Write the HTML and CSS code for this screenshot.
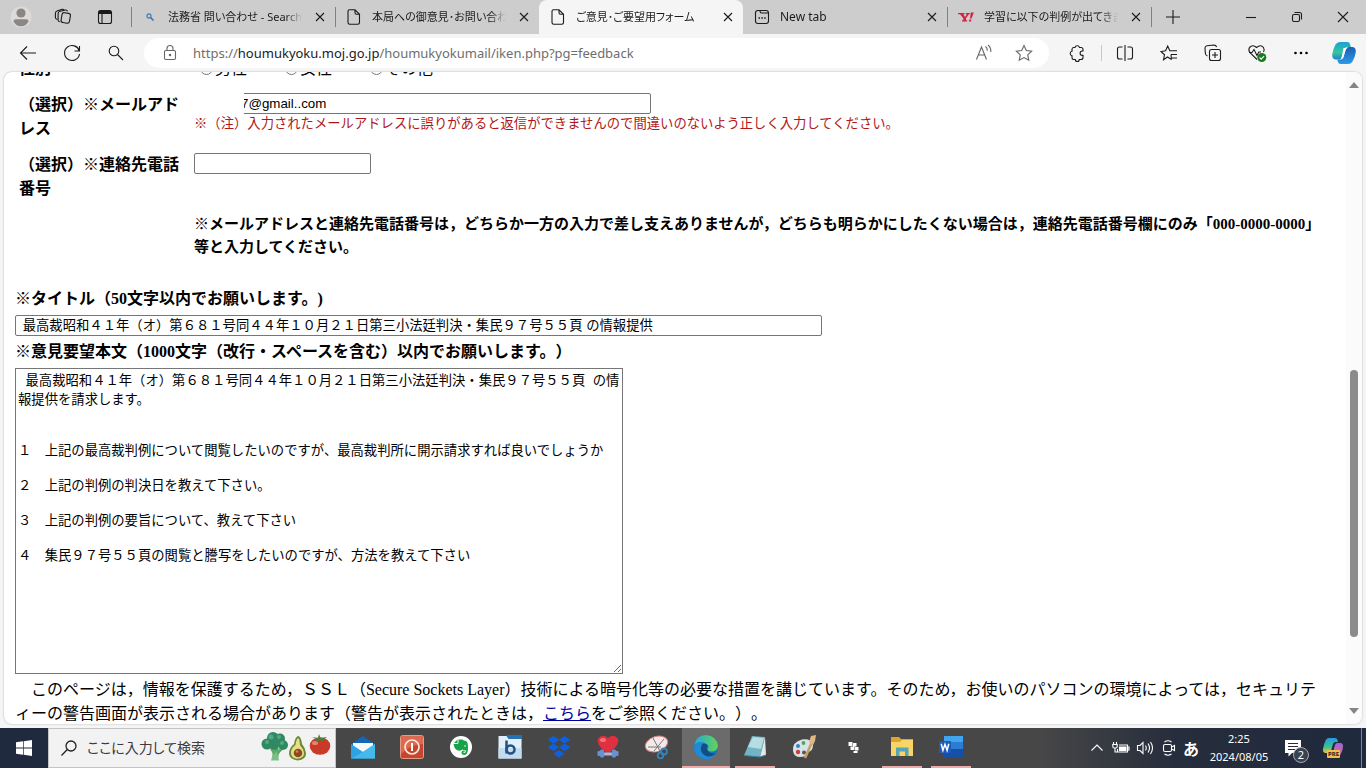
FILE: index.html
```html
<!DOCTYPE html>
<html lang="ja">
<head>
<meta charset="utf-8">
<title>ご意見･ご要望用フォーム</title>
<link rel="stylesheet" href="styles.css">
</head>
<body>
<header class="tabstrip">
  <div class="strip-tools">
    <button class="strip-btn" aria-label="プロファイル"><svg width="22" height="22" viewBox="0 0 22 22"><circle cx="11" cy="11" r="10.5" fill="#dedad8"/><circle cx="11" cy="7" r="4.6" fill="#8b8683"/><path d="M3.6 15.2q0-2 2-2h10.800q2 0 2 2q-1.800 5-7.400 5t-7.400-5z" fill="#8b8683"/></svg></button>
    <button class="strip-btn" aria-label="ワークスペース"><svg class="line" width="18" height="18" viewBox="0 0 18 18"><rect x="7.500" y="5" width="8.500" height="10" rx="2.200" transform="rotate(10 12 10)"/><path d="M5.800 13.800q-1.500 0-1.700-1.500V5.500Q4.200 3.800 6 3.300L11.500 2q1.500-.2 2 1.200M3.300 11.500Q1.500 11 1.400 9.500V5.200Q1.500 3.500 3 3L8 1.300q1.500-.4 2.200.8"/></svg></button>
    <button class="strip-btn" aria-label="タブ操作メニュー"><svg class="line" width="18" height="18" viewBox="0 0 18 18"><rect x="2.500" y="2.500" width="13" height="13" rx="2"/><path d="M3 4.500h12" stroke-width="3"/><path d="M6 5v10"/></svg></button>
  </div>
  <nav class="tabs" aria-label="タブ">
    <div class="tab sep">
      <svg class="tab-icon" viewBox="0 0 16 16"><circle cx="7" cy="7" r="2" fill="none" stroke="#4b86b5" stroke-width="1.300"/><path d="m8.500 8.500 3 3" stroke="#3b76a8" stroke-width="1.600"/></svg>
      <a class="tab-title" href="#">法務省 問い合わせ - Search</a>
      <button class="tab-close" aria-label="閉じる"><svg class="line" width="16" height="16" viewBox="0 0 16 16"><path d="m4 4 8 8M12 4l-8 8"/></svg></button>
    </div>
    <div class="tab sep">
      <svg class="tab-icon line" viewBox="0 0 16 16"><path d="M3.500.8H9l4.500 4.500V13.500q0 1.700-1.700 1.700H3.700Q2 15.200 2 13.500V2.300Q2 .8 3.500.8zM9 .8v3q0 1.500 1.500 1.500h3"/></svg>
      <a class="tab-title" href="#">本局への御意見･お問い合わせ</a>
      <button class="tab-close" aria-label="閉じる"><svg class="line" width="16" height="16" viewBox="0 0 16 16"><path d="m4 4 8 8M12 4l-8 8"/></svg></button>
    </div>
    <div class="tab active">
      <svg class="tab-icon line" viewBox="0 0 16 16"><path d="M3.500.8H9l4.500 4.500V13.500q0 1.700-1.700 1.700H3.700Q2 15.200 2 13.500V2.300Q2 .8 3.500.8zM9 .8v3q0 1.500 1.500 1.500h3"/></svg>
      <a class="tab-title" href="#">ご意見･ご要望用フォーム</a>
      <button class="tab-close" aria-label="閉じる"><svg class="line" width="16" height="16" viewBox="0 0 16 16"><path d="m4 4 8 8M12 4l-8 8"/></svg></button>
    </div>
    <div class="tab">
      <svg class="tab-icon line" viewBox="0 0 16 16"><rect x="1.500" y="1.500" width="13" height="13" rx="2.500"/><path d="M6 1.500q0 2.500 1.500 2.500h7"/><path d="M4.500 9h1.500M7.300 9h1.500M10.200 9h1.500" stroke-width="1.600"/></svg>
      <a class="tab-title latin" href="#">New tab</a>
      <button class="tab-close" aria-label="閉じる"><svg class="line" width="16" height="16" viewBox="0 0 16 16"><path d="m4 4 8 8M12 4l-8 8"/></svg></button>
    </div>
    <div class="tab sep">
      <svg class="tab-icon" viewBox="0 0 16 16"><path d="M0 4h6.500v1.300H5.300L7 8l2-2.700H7.800V4h4v1.300h-1L8 9.300v2h1.200v1.200H4V11.300h1.300v-2L2 5.300H0zM12.800 3.500h3L13.500 9.500h-1.500zM11.500 10.500h2l-.6 2h-2z" fill="#d3223f"/></svg>
      <a class="tab-title" href="#">学習に以下の判例が出てきました</a>
      <button class="tab-close" aria-label="閉じる"><svg class="line" width="16" height="16" viewBox="0 0 16 16"><path d="m4 4 8 8M12 4l-8 8"/></svg></button>
    </div>
    <button class="new-tab sep" aria-label="新しいタブ"><svg class="line" width="16" height="16" viewBox="0 0 16 16"><path d="M8 1v14M1 8h14"/></svg></button>
  </nav>
  <div class="window-controls">
    <button class="win-btn" aria-label="最小化"><svg class="line" width="12" height="12" viewBox="0 0 12 12"><path d="M1 6.500h10"/></svg></button>
    <button class="win-btn" aria-label="元に戻す"><svg class="line" width="12" height="12" viewBox="0 0 12 12"><rect x="1.500" y="3.500" width="7" height="7" rx="1.500"/><path d="M3.500 1.500h5q2 0 2 2v5"/></svg></button>
    <button class="win-btn" aria-label="閉じる"><svg class="line" width="12" height="12" viewBox="0 0 12 12"><path d="m1 1 10 10M11 1 1 11"/></svg></button>
  </div>
</header>

<div class="toolbar">
  <button class="tool" aria-label="戻る"><svg class="line" width="20" height="20" viewBox="0 0 20 20"><path d="M18 10H2.500M9 3.500 2.500 10 9 16.500"/></svg></button>
  <button class="tool" aria-label="更新"><svg class="line" width="20" height="20" viewBox="0 0 20 20"><path d="M17.300 8A7.500 7.500 0 1 0 17.500 11M17.500 3v5H12.500"/></svg></button>
  <button class="tool" aria-label="検索"><svg class="line" width="20" height="20" viewBox="0 0 20 20"><circle cx="8" cy="8" r="4.800"/><path d="m11.500 11.500 5.500 5.500"/></svg></button>
  <div class="address">
    <svg class="line gray" width="20" height="20" viewBox="0 0 20 20"><rect x="4.500" y="7.500" width="11" height="9" rx="1.500"/><path d="M7 7.500V5.500a3 3 0 0 1 6 0v2"/><circle cx="10" cy="12" r=".7"/></svg>
    <div class="url" role="textbox" contenteditable="true" spellcheck="false" aria-label="アドレス">https://<span class="host">houmukyoku.moj.go.jp</span>/houmukyokumail/iken.php?pg=feedback</div>
    <button class="in-address" aria-label="音声で読み上げる"><svg class="line gray" width="20" height="20" viewBox="0 0 20 20"><path d="M2.500 16.500 7.500 4l5 12.500M4.300 12h6.400M11.500 3.500q2 1.500 1.800 4.200M14 2q3.200 2.600 2.800 7"/></svg></button>
    <button class="in-address" aria-label="お気に入りに追加"><svg class="line gray" width="20" height="20" viewBox="0 0 20 20"><path d="m10 2.500 2.300 5 5.400.7-4 3.700 1.100 5.400-4.800-2.700-4.800 2.700 1.100-5.400-4-3.700 5.400-.7z"/></svg></button>
  </div>
  <button class="tool" aria-label="拡張機能"><svg class="line" width="20" height="20" viewBox="0 0 20 20"><path d="M6.500 4.500H8a2.300 2.300 0 0 1 4.500 0H14q2 0 2 2V8h-.7a2.200 2.200 0 0 0 0 4.400h.7V14.500q0 2-2 2h-1.700a2 2 0 0 1-4 0H6.500q-1.500 0-1.500-2V12.700a2.300 2.300 0 0 1 0-4.500V6.500q0-2 1.500-2z"/></svg></button>
  <span class="divider"></span>
  <button class="tool" aria-label="画面を分割"><svg class="line" width="20" height="20" viewBox="0 0 20 20"><path d="M10 2v16M7.500 4H4.500Q2.500 4 2.500 6v8q0 2 2 2h3M12.500 4h3q2 0 2 2v8q0 2-2 2h-3"/></svg></button>
  <button class="tool" aria-label="お気に入り"><svg class="line" width="20" height="20" viewBox="0 0 20 20"><path d="M12.500 16.500 8.500 14 4.500 16.800l1-5L2 8.500l4.600-.7L8.700 3l2.100 4.800H18M12 11.500h6M13 15h5M12 11.500l.5 5"/></svg></button>
  <button class="tool" aria-label="コレクション"><svg class="line" width="20" height="20" viewBox="0 0 20 20"><rect x="6.500" y="6.500" width="11" height="11" rx="2"/><path d="M12 9v6M9 12h6M4.500 13Q2.500 12.500 2.300 10L2 5Q2 3 4 2.700l7-.7q2 0 2.600 2"/></svg></button>
  <button class="tool" aria-label="ブラウザーのエッセンシャル"><svg class="line" width="20" height="20" viewBox="0 0 20 20"><path d="M10 16.500 3 9.700Q1 7 2.500 4.500 5.800 1 9.500 4.500 13.800 1 16.500 4.500q1.300 2.500 0 4.500M2 9.500h3L7 6.500l3 6 1.800-3.500H14"/><circle cx="14.800" cy="14.500" r="4.500" fill="#187a1c" stroke="none"/><path d="m12.600 14.500 1.600 1.600 2.900-3" stroke="#fff"/></svg></button>
  <button class="tool" aria-label="設定など"><svg width="20" height="20" viewBox="0 0 20 20"><circle cx="4.500" cy="10" r="1.300"/><circle cx="10" cy="10" r="1.300"/><circle cx="15.500" cy="10" r="1.300"/></svg></button>
  <button class="tool" aria-label="Copilot"><svg width="26" height="26" viewBox="0 0 26 26"><defs><linearGradient id="cl" x2="0" y2="1"><stop stop-color="#1aa0d8"/><stop offset=".6" stop-color="#35c79b"/><stop offset="1" stop-color="#1d7fd0"/></linearGradient><linearGradient id="cr" x2="0" y2="1"><stop stop-color="#1c5db0"/><stop offset="1" stop-color="#2a9be8"/></linearGradient></defs><path d="M9 2h7.500q2 0 2.500 2l.8 3h-3.500q-2 0-2.600 2l-2.500 8q-.8 2.500-3 2.500H5q-4 0-3.800-5Q2 9 4.500 4.500 6 2 9 2z" fill="url(#cl)"/><path d="M17 24H9.500q-2 0-2.500-2l-.8-2.500h3.500q2 0 2.600-2l2.500-8q.8-2.500 3-2.500H21q4 0 3.800 5-.8 5.500-3.300 9.500Q20 24 17 24z" fill="url(#cr)"/><path d="M12.500 8h4q-1.600.5-2 2l-2 7q-.5 1.500-2 1.500h-1q1-.7 1.300-2z" fill="#fff"/></svg></button>
</div>

<main class="panel">
  <form class="page">
    <div class="fields">
      <span class="label">性別</span>
      <div class="genders">
        <label><input type="radio" name="sex">男性</label>
        <label><input type="radio" name="sex">女性</label>
        <label><input type="radio" name="sex">その他</label>
      </div>
      <label class="label" for="mail">（選択）※メールアドレス</label>
      <div class="mail-cell">
        <input class="box mail" id="mail" type="text" value="7@gmail..com">
        <span class="mask"></span>
        <p class="warn">※（注）入力されたメールアドレスに誤りがあると返信ができませんので間違いのないよう正しく入力してください。</p>
      </div>
      <label class="label" for="tel">（選択）※連絡先電話番号</label>
      <div class="tel-cell"><input class="box tel" id="tel" type="text"></div>
      <p class="note">※メールアドレスと連絡先電話番号は，どちらか一方の入力で差し支えありませんが，どちらも明らかにしたくない場合は，連絡先電話番号欄にのみ「000-0000-0000」等と入力してください。</p>
    </div>
    <label class="heading" for="subject">※タイトル（50文字以内でお願いします。)</label>
    <input class="box subject" id="subject" type="text" value=" 最高裁昭和４１年（オ）第６８１号同４４年１０月２１日第三小法廷判決・集民９７号５５頁 の情報提供">
    <label class="heading" for="body">※意見要望本文（1000文字（改行・スペースを含む）以内でお願いします。）</label>
    <textarea class="body-text" id="body">  最高裁昭和４１年（オ）第６８１号同４４年１０月２１日第三小法廷判決・集民９７号５５頁  の情報提供を請求します。


１　上記の最高裁判例について閲覧したいのですが、最高裁判所に開示請求すれば良いでしょうか

２　上記の判例の判決日を教えて下さい。

３　上記の判例の要旨について、教えて下さい

４　集民９７号５５頁の閲覧と謄写をしたいのですが、方法を教えて下さい</textarea>
    <p class="ssl">　このページは，情報を保護するため，ＳＳＬ（Secure Sockets Layer）技術による暗号化等の必要な措置を講じています。そのため，お使いのパソコンの環境によっては，セキュリティーの警告画面が表示される場合があります（警告が表示されたときは，<a href="#">こちら</a>をご参照ください。）。</p>
  </form>
  <div class="scrollbar" aria-hidden="true">
    <svg width="10" height="6" viewBox="0 0 10 6"><path d="M5 0l5 6H0z" fill="#858585"/></svg>
    <div class="track"><div class="thumb"></div></div>
    <svg width="10" height="6" viewBox="0 0 10 6"><path d="M5 6 0 0h10z" fill="#858585"/></svg>
  </div>
</main>

<footer class="taskbar">
  <button class="start" aria-label="スタート"><svg width="16" height="16" viewBox="0 0 16 16" fill="#fff"><path d="M0 2.300 7 1.300v6.300H0zM7.700 1.200 16 0v7.600H7.700zM0 8.400h7v6.300l-7-1zM7.700 8.400H16V16l-8.300-1.200z"/></svg></button>
  <label class="search">
    <svg width="18" height="18" viewBox="0 0 18 18" fill="none" stroke="#222" stroke-width="1.300"><circle cx="11" cy="7" r="5"/><path d="M7.300 10.500 1.500 16.500"/></svg>
    <input class="search-input" type="text" placeholder="ここに入力して検索" aria-label="検索">
    <svg width="72" height="34" viewBox="0 0 72 34"><path d="M12 17q1 7-1 12.500h8q-1.500-5 2-11l-4-2z" fill="#7cbf86"/><path d="m11 18 3 4 3-5 1 5 5-5" stroke="#58a868" stroke-width="2" fill="none"/><g fill="#2f8a62"><circle cx="7" cy="13" r="5.500"/><circle cx="13" cy="7" r="6"/><circle cx="20" cy="7.500" r="5"/><circle cx="23" cy="14" r="5"/><circle cx="14" cy="14" r="5"/></g><g fill="#54a982"><circle cx="11" cy="6" r="2.500"/><circle cx="19" cy="6" r="2"/><circle cx="7" cy="11" r="2"/><circle cx="22" cy="12" r="2"/></g><path d="M38 5q-3 1-4 8-5 4-5 9.500t8.500 7q9-1 8.500-7.500-.5-5-4-9Q41 5 38 5z" fill="#6b8a35"/><path d="M38 7q-2 2-2.500 7-4.500 3-4.500 8t6.500 5.800q7-.8 6.500-6-.5-4-4-7.500Q39.500 7 38 7z" fill="#e9dd8b"/><circle cx="38" cy="22" r="4.300" fill="#8c4a20"/><circle cx="37" cy="20.500" r="1.300" fill="#c98a56"/><ellipse cx="60" cy="15" rx="10.300" ry="8.800" fill="#c93a28"/><ellipse cx="55" cy="12" rx="3" ry="2" fill="#e88370"/><path d="m52 6 6 1 1-4 1.500 4L67 6l-4 3 2 2-5-2-4 2 .5-3z" fill="#4b7d3a"/></svg>
  </label>
  <div class="apps">
    <button class="app" aria-label="メール"><svg width="26" height="26" viewBox="0 0 26 26"><path d="M1 10 13 2l12 8v14H1z" fill="#1465b5"/><path d="M3 9h20v9H3z" fill="#f4f8fb"/><path d="m1 10 12 8L25 10v14.500H1z" fill="#2ba3e4"/><path d="M1 24.500 13 18l12-8v14.500z" fill="#45b8ee"/></svg></button>
    <button class="app" aria-label="シャットダウン"><svg width="26" height="26" viewBox="0 0 26 26"><rect x="1.500" y="1.500" width="23" height="23" rx="2" fill="#c8452d" stroke="#e79a86"/><path d="M2 2h22v8Q12 10 2 20z" fill="#dc6a50"/><circle cx="13" cy="13" r="7" fill="none" stroke="#fbe5de" stroke-width="1.700"/><path d="M13 9v8" stroke="#fff" stroke-width="2"/></svg></button>
    <button class="app" aria-label="Evernote"><svg width="26" height="26" viewBox="0 0 26 26"><circle cx="13" cy="13" r="11" fill="#fff"/><path d="M10.500 5.500h4q1 1.200 3.500 1.500 2 .5 2 7 0 6.500-3.500 7-3 0-3-2.500 0-2 2-2 1.500.2 1.500 1.200h-1.500v1q2.300 1 2.500-2.200-2 0-3.500-1-1.500 1.500-4.500 1-3.500-.8-4.500-6.500H9q1.500 0 1.500-1.500z" fill="#16a448"/><path d="M9.500 5.500v3.500H6z" fill="#16a448"/><circle cx="17" cy="12" r=".8" fill="#fff"/></svg></button>
    <button class="app" aria-label="b"><svg width="26" height="26" viewBox="0 0 26 26"><path d="M10 1h15v10H10z" fill="#2273b5"/><path d="M1.500 2h8l2 3h13v19.500h-23z" fill="#e1effa"/><path d="M1.500 14h23v10.500h-23z" fill="#c2ddf1"/><path d="M9.500 6.500v13" stroke="#24527d" stroke-width="2.500"/><circle cx="13.500" cy="15.500" r="4" fill="none" stroke="#24527d" stroke-width="2.500"/></svg></button>
    <button class="app" aria-label="Dropbox"><svg width="26" height="26" viewBox="0 0 26 26" fill="#0f60e0"><path d="m7.500 2 6 3.800-6 3.700-6-3.700zM18.500 2l6 3.800-6 3.700-5.500-3.700zM7.500 9.500l5.500 3.700-5.500 3.800-6-3.800zM18.500 9.500l6 3.700-6 3.800-5.500-3.800zM13 16l5.500 3.700-5.500 3.800-5.500-3.800z"/></svg></button>
    <button class="app" aria-label="健康"><svg width="26" height="26" viewBox="0 0 26 26"><path d="M13 20Q1 11 3 5q4-6 10-1 6-5 10 1 2 6-10 15z" fill="#df3041"/><ellipse cx="8" cy="6" rx="3" ry="2" fill="#f3727a"/><path d="M8 20h10" stroke="#a2b9e0" stroke-width="3"/><g fill="#6a91d2"><rect x="5" y="15.500" width="4" height="8" rx="1.500"/><rect x="17" y="15.500" width="4" height="8" rx="1.500"/><rect x="2.500" y="17" width="3" height="5" rx="1"/><rect x="20.500" y="17" width="3" height="5" rx="1"/></g></svg></button>
    <button class="app" aria-label="Snipping Tool"><svg width="26" height="26" viewBox="0 0 26 26"><ellipse cx="12.500" cy="10" rx="11.500" ry="7.500" fill="#f3e9ea" stroke="#d77c83" transform="rotate(-18 12.500 10)"/><path d="m9 4 8 15M20 5 10 17M4 13h13" stroke="#777" fill="none"/><g fill="none" stroke="#3683b5" stroke-width="1.800"><circle cx="20" cy="17.500" r="3"/><circle cx="16.500" cy="21.500" r="2.800"/></g></svg></button>
    <button class="app current" aria-label="Microsoft Edge"><svg width="26" height="26" viewBox="0 0 26 26"><defs><linearGradient id="eg"><stop stop-color="#25a9df"/><stop offset="1" stop-color="#63d355"/></linearGradient></defs><circle cx="13" cy="13" r="12" fill="#1673bf"/><path d="M1 12Q3 1 13 1q11 1 12 11-.5 5.500-7 5.500-4.500-.5-3.200-3 2-3-2-5Q5 6 1 12z" fill="url(#eg)"/><path d="M9 10q-4 9 5 12 5 1.200 9-2-4 5.500-11 5Q1 23 1 13 5 6.500 13 9.500q-3-.5-4 .5z" fill="#2289d4"/><path d="M9.500 10Q5 17 12 21.500q5.500 2.500 11-2-5 1-8-2.500-2.500-3-.5-5-1.500-3-5-2z" fill="#124d87"/></svg></button>
    <button class="app running" aria-label="メモ帳"><svg width="26" height="26" viewBox="0 0 26 26"><path d="m10 2 13 1-5 20-16-1.500z" fill="#73b4c4"/><path d="m11 3 11 1-3 11-13-2z" fill="#b6dde3"/><path d="m23 3 1 18-6 2z" fill="#dfe8ec"/><path d="m2 21.500 16 1.500 6-2" stroke="#397f99" fill="none"/></svg></button>
    <button class="app" aria-label="ペイント"><svg width="26" height="26" viewBox="0 0 26 26"><path d="M2 17Q1 8 11 5.500q10-1 11 5.500 0 6-5 7-1.500 5-8 5-6 0-7-6z" fill="#d7e3ea"/><circle cx="7" cy="12" r="2" fill="#3c7fc0"/><circle cx="12.500" cy="9" r="1.900" fill="#55a34c"/><circle cx="7" cy="18" r="2.200" fill="#d33b34"/><circle cx="13" cy="18.500" r="2" fill="#555"/><path d="m14 24 7-16" stroke="#c8a064" stroke-width="2.600"/><path d="m18 8 2-6 5-1-1 6-2 4z" fill="#dfb982"/></svg></button>
    <button class="app" aria-label="ブロック"><svg width="26" height="26" viewBox="0 0 26 26" fill="#fff"><path d="M8.500 8h4v4h-4zM13 9h3.500v3.500H13zM10.500 12.500h4V16h-4zM15 13h3.500v3.500H15zM13.500 17h4v2h-4z"/></svg></button>
    <button class="app running" aria-label="エクスプローラー"><svg width="26" height="26" viewBox="0 0 26 26"><path d="M2 3h8l2 2h12v6H2z" fill="#e0a42c"/><path d="M2 8h9l2-2h11v16H2z" fill="#f9d568"/><path d="M7 22v-8.500h12.500V22h-3.500v-4.500h-5.500V22z" fill="#58a4b4"/></svg></button>
    <button class="app running" aria-label="Word"><svg width="26" height="26" viewBox="0 0 26 26"><rect x="6" y="2" width="19" height="21" rx="1" fill="#2b7cd3"/><path d="M6 2h19v6H6z" fill="#41a5ee"/><path d="M6 15h19v8H6z" fill="#174ea6"/><rect x="1" y="7" width="12" height="12" rx="1" fill="#185abd"/><path d="m3.200 9.700 1.700 6.600 2.100-6 2.100 6 1.700-6.600" fill="none" stroke="#fff" stroke-width="1.500"/></svg></button>
  </div>
  <div class="tray">
    <button class="tray-btn" aria-label="隠れているインジケーター"><svg class="tray-icon" viewBox="0 0 18 18"><path d="m3.500 11.500 5.500-5.500 5.500 5.500"/></svg></button>
    <button class="tray-btn" aria-label="バッテリー"><svg class="tray-icon" viewBox="0 0 18 18"><path d="M7 6h8.500v7H5.500v-3M15.500 8H17v3h-1.500M1.500 3v2.500M4.500 3v2.500M.8 5.500h4.400v2q0 1.500-1.500 1.500H2.300Q.8 9 .8 7.500zM3 9v4h2.500"/><path d="M7.500 8H14v3.500H7.500z" fill="#fff"/></svg></button>
    <button class="tray-btn" aria-label="音量"><svg class="tray-icon" viewBox="0 0 18 18"><path d="M1.500 6.500h2.500l3-3v11l-3-3H1.500zM9.500 6.500q1.500 2.500 0 5M12 4.500q3 4.500 0 9M14.500 3q4 6 0 12"/></svg></button>
    <button class="tray-btn" aria-label="会議"><svg class="tray-icon" viewBox="0 0 18 18"><rect x="3.500" y="5.500" width="8" height="7" rx="1.500"/><path d="m11.500 8 3-1.500v5l-3-1.500M4.500 3q3.500-2.500 7 0M4.500 15q3.500 2.500 7 0"/></svg></button>
    <button class="tray-btn ime" aria-label="IME">あ</button>
    <button class="clock"><span>2:25</span><span>2024/08/05</span></button>
    <button class="notify" aria-label="通知"><svg width="26" height="26" viewBox="0 0 26 26"><path d="M2 5h16v13H9l-3.500 3.500V18H2z" fill="#fff"/><path d="M5 8.500h10M5 11.500h10M5 14.500h7" stroke="#252d3d"/></svg><span class="count">2</span></button>
    <button class="pre" aria-label="Copilot プレビュー"><svg width="22" height="22" viewBox="0 0 22 22"><defs><linearGradient id="pl" x2="0" y2="1"><stop stop-color="#219be8"/><stop offset=".6" stop-color="#3fc08b"/><stop offset="1" stop-color="#f0c441"/></linearGradient><linearGradient id="pr" x2="0" y2="1"><stop stop-color="#9467e6"/><stop offset="1" stop-color="#f06a70"/></linearGradient></defs><path d="M7 1h6q2 0 2.500 2l.5 2h-2.500q-2 0-2.500 2L9 14q-.6 2-2.500 2H4q-3.500 0-3-4 .8-5 2.800-9Q5 1 7 1z" fill="url(#pl)"/><path d="M14 19H8l3-4 2-7q.5-2 2.500-2H18q3.500 0 3 4-.5 4-2.500 7.500Q17 19 14 19z" fill="url(#pr)"/></svg><span class="pre-tag">PRE</span></button>
    <button class="show-desktop" aria-label="デスクトップの表示"></button>
  </div>
</footer>
</body>
</html>
```

FILE: styles.css
```css
* { box-sizing: border-box; }

body {
  margin: 0;
  height: 100vh;
  display: flex;
  flex-direction: column;
  overflow: hidden;
  background: #f5f5f5;
  color: #000;
  font-family: "Liberation Serif", "Noto Sans CJK JP", serif;
  font-size: 16px;
  line-height: 24px;
  text-spacing-trim: space-all;
}

p { margin: 0; }
svg { flex: none; }

button {
  display: flex;
  align-items: center;
  justify-content: center;
  padding: 0;
  border: 0;
  background: none;
  flex: none;
}

.line { fill: none; stroke: #1b1b1b; stroke-width: 1.1; }
.gray { stroke: #666; }

/* Tab strip */
.tabstrip {
  display: flex;
  height: 34px;
  flex: none;
  background: #cdcdcd;
  font-family: "Noto Sans", "Noto Sans CJK JP", sans-serif;
  line-height: 20px;
}
.strip-tools { display: flex; width: 131px; flex: none; }
.strip-btn { width: 42px; }
.tabs { display: flex; flex: 1; min-width: 0; }
.tab {
  display: flex;
  align-items: center;
  gap: 10px;
  flex: 0 1 204px;
  min-width: 0;
  padding: 0 7px 0 11px;
}
.sep {
  background: linear-gradient(#808080, #808080) left center / 1px 20px no-repeat;
}
.active { background: #f5f5f5; border-radius: 8px 8px 0 0; }
.tab-icon { width: 16px; height: 16px; }
.tab-title {
  flex: 1;
  min-width: 0;
  overflow: hidden;
  white-space: nowrap;
  color: #1b1b1b;
  font-size: 11px;
  text-decoration: none;
  font-feature-settings: "palt";
  mask-image: linear-gradient(to right, #000 88%, transparent);
}
.latin { font-size: 12px; }
.tab-close { width: 16px; height: 16px; }
.new-tab { width: 44px; }
.window-controls { display: flex; flex: none; }
.win-btn { width: 46px; }

/* Toolbar */
.toolbar {
  display: flex;
  align-items: center;
  height: 38px;
  flex: none;
  padding: 0 1px 0 6px;
}
.tool { width: 44px; height: 32px; }
.tool:last-child { width: 42px; }
.divider { width: 1px; height: 16px; margin: 0 1px 0 2px; background: #c8c8c8; }
.address {
  display: flex;
  align-items: center;
  flex: 1;
  min-width: 0;
  height: 30px;
  margin: 0 6px;
  padding: 0 5px 0 16px;
  border-radius: 15px;
  background: #fff;
}
.url {
  flex: 1;
  min-width: 0;
  margin-left: 13px;
  overflow: hidden;
  white-space: nowrap;
  outline: 0;
  font-family: "Noto Sans", sans-serif;
  font-size: 13px;
  line-height: 20px;
  color: #6e6e6e;
}
.host { color: #1b1b1b; }
.in-address { width: 40px; }

/* Web page */
.panel {
  display: flex;
  flex: 1;
  min-height: 0;
  margin: 0 4px 4px;
  overflow: hidden;
  border-radius: 8px;
  background: #fff;
  box-shadow: 0 0 2px #aaa;
}
.page {
  flex: 1;
  min-width: 0;
  margin-top: -16px;
  padding: 0 12px 0 11px;
  line-break: normal;
}
.fields {
  display: grid;
  grid-template-columns: 160px 1fr;
  gap: 11px 15px;
  padding: 0 11px 27px 4px;
}
.label, .heading, .note, .ssl { padding-top: 1px; }
.label, .heading { font-weight: bold; }
.genders { display: flex; gap: 32px; }
.genders label { display: flex; align-items: center; gap: 2px; }
.genders input { width: 13px; height: 13px; margin: 0 0 0 6px; }
.box {
  display: block;
  height: 21px;
  padding: 0 2px 2px;
  border: 1px solid #767676;
  border-radius: 2px;
  background: #fff;
  font-family: "Liberation Sans", "Noto Sans CJK JP", sans-serif;
}
.mail-cell { position: relative; padding-top: 1px; }
.mail { width: 457px; padding: 1px 2px 1px 46px; }
.mask {
  position: absolute;
  left: 0;
  top: -10px;
  width: 50px;
  height: 33px;
  background: #fff;
}
.warn { color: #b01818; font-size: smaller; line-height: 20px; }
.tel-cell { padding-top: 1px; }
.tel { width: 177px; }
.note { grid-column: 2; font-size: 15px; line-height: 23px; font-weight: bold; }
.heading { display: block; }
.subject { width: 807px; margin: 4px 0 3px; padding-left: 3px; }
.body-text {
  display: block;
  width: 608px;
  height: 306px;
  margin: 4px 0 3px;
  padding: 1px 2px;
  border: 1px solid #767676;
  border-radius: 0;
  font-family: Inter, "Noto Sans CJK JP", sans-serif;
}
.ssl { padding-right: 8px; }
.ssl a { color: #0000a0; }

.scrollbar {
  display: flex;
  flex-direction: column;
  align-items: center;
  width: 16px;
  padding: 10px 0;
  background: #fbfbfb;
}
.track { display: flex; flex: 1; width: 8px; padding-top: 282px; }
.thumb { width: 8px; height: 267px; border-radius: 4px; background: #8b8b8b; }

/* Taskbar */
.taskbar {
  display: flex;
  height: 40px;
  flex: none;
  background: linear-gradient(to right, #474747 76%, #262d3c 86%, #202a3e);
  color: #fff;
  font-family: "Noto Sans", "Noto Sans CJK JP", sans-serif;
}
.taskbar button { color: #fff; font-family: inherit; }
.start { width: 48px; background: #1f2a3f; }
.search {
  display: flex;
  align-items: center;
  width: 288px;
  padding: 0 3px 0 11px;
  border: 1px solid #c4c4c4;
  background: #f2f2f2;
}
.search-input {
  flex: 1;
  min-width: 0;
  padding: 0 0 2px 9px;
  border: 0;
  outline: 0;
  background: none;
  font-family: "Noto Sans CJK JP", sans-serif;
  font-size: 14px;
  font-feature-settings: "palt";
}
.search-input::placeholder { color: #3c3c3c; }
.apps { display: flex; gap: 1px; margin-left: 3px; }
.app { width: 48px; border-bottom: 2px solid transparent; }
.current { background: #6b6b6b; border-bottom-color: #f0a9a9; }
.running {
  background: linear-gradient(#f0a9a9, #f0a9a9) center bottom / 40px 2px no-repeat border-box;
}
.tray { display: flex; margin-left: auto; }
.tray-btn { width: 24px; }
.tray-icon { width: 18px; height: 18px; fill: none; stroke: #fff; stroke-width: 1.1; }
.ime { font-size: 16px; font-weight: bold; padding-right: 4px; }
.clock {
  width: 68px;
  flex-direction: column;
  font-size: 11px;
  line-height: 18px;
}
.notify { position: relative; width: 46px; }
.count {
  position: absolute;
  left: 20px;
  top: 19px;
  width: 16px;
  height: 16px;
  border: 1px solid #aaa;
  border-radius: 8px;
  background: #3a4150;
  font-size: 11px;
  line-height: 14px;
}
.pre { position: relative; width: 28px; margin-right: 14px; }
.pre-tag {
  position: absolute;
  left: 8px;
  top: 22px;
  padding: 0 1px;
  border-radius: 1px;
  background: #efc04c;
  color: #222;
  font-size: 6px;
  font-weight: bold;
  line-height: 8px;
}
.show-desktop { width: 5px; border-left: 1px solid #7d8390; }
```
